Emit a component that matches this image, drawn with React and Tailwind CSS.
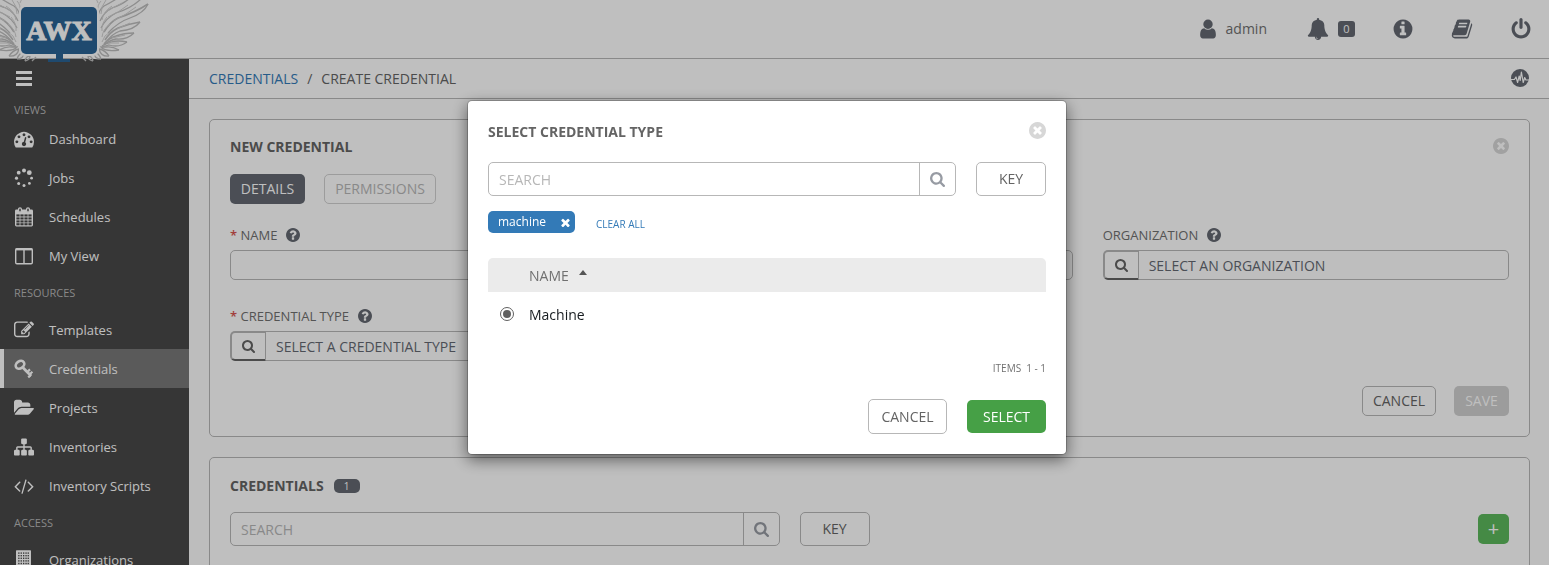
import React from "react";

const FA = {
  search: { box: "64 128 1664 1664", d: "M1216 832q0-185-131.5-316.5t-316.5-131.5-316.5 131.5-131.5 316.5 131.5 316.5 316.5 131.5 316.5-131.5 131.5-316.5zm512 832q0 52-38 90t-90 38q-54 0-90-38l-343-342q-179 124-399 124-143 0-273.5-55.5t-225-150-150-225-55.5-273.5 55.5-273.5 150-225 225-150 273.5-55.5 273.5 55.5 225 150 150 225 55.5 273.5q0 220-124 399l343 343q37 37 37 90z" },
  user: { box: "0 0 1792 1792", d: "M1536 1399q0 109-62.5 187t-150.5 78h-854q-88 0-150.5-78t-62.5-187q0-85 8.5-160.5t31.5-152 58.5-131 94-89 134.5-34.5q131 128 313 128t313-128q76 0 134.5 34.5t94 89 58.5 131 31.5 152 8.5 160.5zm-256-887q0 159-112.5 271.5t-271.5 112.5-271.5-112.5-112.5-271.5 112.5-271.5 271.5-112.5 271.5 112.5 112.5 271.5z" },
  timesCircle: { box: "128 128 1536 1536", d: "M1277 1122q0-26-19-45l-181-181 181-181q19-19 19-45 0-27-19-46l-90-90q-19-19-46-19-26 0-45 19l-181 181-181-181q-19-19-45-19-27 0-46 19l-90 90q-19 19-19 46 0 26 19 45l181 181-181 181q-19 19-19 45 0 27 19 46l90 90q19 19 46 19 26 0 45-19l181-181 181 181q19 19 45 19 27 0 46-19l90-90q19-19 19-46zm387-226q0 209-103 385.5t-279.5 279.5-385.5 103-385.5-103-279.5-279.5-103-385.5 103-385.5 279.5-279.5 385.5-103 385.5 103 279.5 279.5 103 385.5z" },
  question: { box: "128 128 1536 1536", d: "M1024 1376v-192q0-14-9-23t-23-9h-192q-14 0-23 9t-9 23v192q0 14 9 23t23 9h192q14 0 23-9t9-23zm256-672q0-88-55.5-163t-138.5-116-170-41q-243 0-371 213-15 24 8 42l132 100q7 6 19 6 16 0 25-12 53-68 86-92 34-24 86-24 48 0 85.5 26t37.5 59q0 38-20 61t-68 45q-63 28-115.5 86.5t-52.5 125.5v36q0 14 9 23t23 9h192q14 0 23-9t9-23q0-19 21.5-49.5t54.5-49.5q32-18 49-28.5t46-35 44.5-48 28-60.5 12.5-81zm384 192q0 209-103 385.5t-279.5 279.5-385.5 103-385.5-103-279.5-279.5-103-385.5 103-385.5 279.5-279.5 385.5-103 385.5 103 279.5 279.5 103 385.5z" },
  info: { box: "0 0 1792 1792", d: "M1152 1376v-160q0-14-9-23t-23-9h-96v-512q0-14-9-23t-23-9h-320q-14 0-23 9t-9 23v160q0 14 9 23t23 9h96v320h-96q-14 0-23 9t-9 23v160q0 14 9 23t23 9h448q14 0 23-9t9-23zm-128-896v-160q0-14-9-23t-23-9h-192q-14 0-23 9t-9 23v160q0 14 9 23t23 9h192q14 0 23-9t9-23zm640 416q0 209-103 385.5t-279.5 279.5-385.5 103-385.5-103-279.5-279.5-103-385.5 103-385.5 279.5-279.5 385.5-103 385.5 103 279.5 279.5 103 385.5z" },
  power: { box: "0 0 1792 1792", d: "M1664 896q0 156-61 298t-164 245-245 164-298 61-298-61-245-164-164-245-61-298q0-182 80.5-343t226.5-270q43-32 95.5-25t83.5 50q32 42 24.5 94.5t-49.5 84.5q-98 74-151.5 181t-53.5 228q0 104 40.5 198.5t109.5 163.5 163.5 109.5 198.5 40.5 198.5-40.5 163.5-109.5 109.5-163.5 40.5-198.5q0-121-53.5-228t-151.5-181q-42-32-49.5-84.5t24.5-94.5q31-43 84-50t95 25q146 109 226.5 270t80.5 343zm-640-768v640q0 52-38 90t-90 38-90-38-38-90v-640q0-52 38-90t90-38 90 38 38 90z" },
  bell: { box: "0 0 1792 1792", d: "M912 1696q0-16-16-16-59 0-101.5-42.5t-42.5-101.5q0-16-16-16t-16 16q0 73 51.5 124.5t124.5 51.5q16 0 16-16zm816-288q0 52-38 90t-90 38h-448q0 106-75 181t-181 75-181-75-75-181h-448q-52 0-90-38t-38-90q50-42 91-88t85-119.5 74.5-158.5 50-206 19.5-260q0-152 117-282.5t307-158.5q-8-19-8-39 0-40 28-68t68-28 68 28 28 68q0 20-8 39 190 28 307 158.5t117 282.5q0 139 19.5 260t50 206 74.5 158.5 85 119.5 91 88z" },
  book: { box: "0 0 1792 1792", d: "M1703 478q40 57 18 129l-275 906q-19 64-76.5 107.5t-122.5 43.5h-923q-77 0-148.5-53.5t-99.5-131.5q-24-67-2-127 0-4 3-27t4-37q1-8-3-21.5t-3-19.5q2-11 8-21t16.5-23.5 16.5-23.5q23-38 45-91.5t30-91.5q3-10 .5-30t-.5-28q3-11 17-28t17-23q21-36 42-92t25-90q1-9-2.500-32t.5-28q4-13 22-30.500t22-22.500q19-26 42.500-84.500t27.500-96.500q1-8-3-25.500t-2-26.500q2-8 9-18t18-23 17-21q8-12 16.500-30.500t15-35 16-36 19.500-32 26.500-23.500 36-11.500 47.500 5.500l-1 3q38-9 51-9h761q74 0 114 56t18 130l-274 906q-36 119-71.500 153.500t-128.500 34.500h-869q-27 0-38 15-11 16-1 43 24 70 144 70h923q29 0 56-15.500t35-41.500l300-987q7-22 5-57 38 15 59 43zm-1064 2q-4 13 2 22.500t20 9.500h608q13 0 25.500-9.500t16.500-22.500l21-64q4-13-2-22.500t-20-9.500h-608q-13 0-25.500 9.500t-16.500 22.500zm-83 256q-4 13 2 22.500t20 9.500h608q13 0 25.500-9.500t16.500-22.500l21-64q4-13-2-22.500t-20-9.500h-608q-13 0-25.500 9.500t-16.500 22.500z" },
  times: { box: "256 256 1280 1280", d: "M1490 1322q0 40-28 68l-136 136q-28 28-68 28t-68-28l-294-294-294 294q-28 28-68 28t-68-28l-136-136q-28-28-28-68t28-68l294-294-294-294q-28-28-28-68t28-68l136-136q28-28 68-28t68 28l294 294 294-294q28-28 68-28t68 28l136 136q28 28 28 68t-28 68l-294 294 294 294q28 28 28 68z" },
  dashboard: { box: "0 0 1792 1792", d: "M384 1152q0-53-37.5-90.5t-90.5-37.5-90.5 37.5-37.5 90.5 37.5 90.5 90.5 37.5 90.5-37.5 37.5-90.5zm192-448q0-53-37.5-90.5t-90.5-37.5-90.5 37.5-37.5 90.5 37.5 90.5 90.5 37.5 90.5-37.5 37.5-90.5zm428 481l101-382q6-26-7.5-48.5t-38.5-29.5-48 6.5-30 39.5l-101 382q-60 5-107 43.5t-63 98.5q-20 77 20 146t117 89 146-20 89-117q16-60-6-117t-72-91zm660-33q0-53-37.5-90.5t-90.5-37.5-90.5 37.5-37.5 90.5 37.5 90.5 90.5 37.5 90.5-37.5 37.5-90.5zm-640-640q0-53-37.5-90.5t-90.5-37.5-90.5 37.5-37.5 90.5 37.5 90.5 90.5 37.5 90.5-37.5 37.5-90.5zm448 192q0-53-37.5-90.5t-90.5-37.5-90.5 37.5-37.5 90.5 37.5 90.5 90.5 37.5 90.5-37.5 37.5-90.5zm320 448q0 261-141 483-19 29-54 29h-1402q-35 0-54-29-141-221-141-483 0-182 71-348t191-286 286-191 348-71 348 71 286 191 191 286 71 348z" },
  edit: { box: "0 0 1792 1792", d: "M888 1184l116-116-152-152-116 116v56h96v96h56zm440-720q-16-16-33 1l-350 350q-17 17-1 33t33-1l350-350q17-17 1-33zm80 594v190q0 119-84.5 203.5t-203.5 84.5h-832q-119 0-203.5-84.5t-84.5-203.5v-832q0-119 84.5-203.5t203.5-84.5h832q63 0 117 25 15 7 18 23 3 17-9 29l-49 49q-14 14-32 8-23-6-45-6h-832q-66 0-113 47t-47 113v832q0 66 47 113t113 47h832q66 0 113-47t47-113v-126q0-13 9-22l64-64q15-15 35-7t20 29zm-96-738l288 288-672 672h-288v-288zm444 132l-92 92-288-288 92-92q28-28 68-28t68 28l152 152q28 28 28 68t-28 68z" },
  folder: { box: "0 -44 1880 1880", d: "M1879 952q0 31-31 66l-336 396q-43 51-120.5 86.5t-143.5 35.5h-1088q-34 0-60.5-13t-26.5-43q0-31 31-66l336-396q43-51 120.5-86.5t143.5-35.5h1088q34 0 60.5 13t26.5 43zm-343-344v160h-832q-94 0-197 47.5t-164 119.5l-337 396-5 6q0-4-.5-12.5t-.5-12.5v-960q0-92 66-158t158-66h320q92 0 158 66t66 158v32h544q92 0 158 66t66 158z" },
  sitemap: { box: "0 0 1792 1792", d: "M1792 1248v320q0 40-28 68t-68 28h-320q-40 0-68-28t-28-68v-320q0-40 28-68t68-28h96v-192h-512v192h96q40 0 68 28t28 68v320q0 40-28 68t-68 28h-320q-40 0-68-28t-28-68v-320q0-40 28-68t68-28h96v-192h-512v192h96q40 0 68 28t28 68v320q0 40-28 68t-68 28h-320q-40 0-68-28t-28-68v-320q0-40 28-68t68-28h96v-192q0-52 38-90t90-38h512v-192h-96q-40 0-68-28t-28-68v-320q0-40 28-68t68-28h320q40 0 68 28t28 68v320q0 40-28 68t-68 28h-96v192h512q52 0 90 38t38 90v192h96q40 0 68 28t28 68z" },
  code: { box: "-64 0 1920 1792", d: "M553 1399l-50 50q-10 10-23 10t-23-10l-466-466q-10-10-10-23t10-23l466-466q10-10 23-10t23 10l50 50q10 10 10 23t-10 23l-393 393 393 393q10 10 10 23t-10 23zm591-1067l-373 1291q-4 13-15.5 19.5t-23.5 2.5l-62-17q-13-4-19.5-15.5t-2.5-24.5l373-1291q4-13 15.5-19.5t23.5-2.5l62 17q13 4 19.5 15.5t2.5 24.5zm657 651l-466 466q-10 10-23 10t-23-10l-50-50q-10-10-10-23t10-23l393-393-393-393q-10-10-10-23t10-23l50-50q10-10 23-10t23 10l466 466q10 10 10 23t-10 23z" },
};

function Icon({ name, className }) {
  return (
    <svg viewBox={FA[name].box} className={`shrink-0 ${className}`} fill="currentColor" aria-hidden="true">
      <path d={FA[name].d} />
    </svg>
  );
}

function JobsIcon() {
  return (
    <svg viewBox="0 0 20 20" className="size-5 shrink-0" fill="currentColor" aria-hidden="true">
      <circle cx="10" cy="2.4" r="2" />
      <circle cx="15.3" cy="4.7" r="2.4" />
      <circle cx="17.6" cy="10.2" r="1.4" />
      <circle cx="15.4" cy="15.4" r="1.4" />
      <circle cx="10" cy="17.6" r="1.5" />
      <circle cx="4.7" cy="15.4" r="1.5" />
      <circle cx="2.5" cy="10.2" r="1.6" />
      <circle cx="4.7" cy="4.7" r="1.9" />
    </svg>
  );
}

function CalendarIcon() {
  return (
    <svg viewBox="0 0 20 20" className="size-5 shrink-0" aria-hidden="true">
      <rect x="1" y="2.5" width="18" height="17" rx="1.4" fill="currentColor" />
      <g fill="#484848">
        {[7.4, 10.4, 13.4, 16.2].map((y) =>
          [2.4, 6.4, 10.4, 14.4].map((x) => <rect key={`${x}-${y}`} x={x} y={y} width="3.2" height="2.1" />)
        )}
      </g>
      <g fill="#484848" stroke="currentColor" strokeWidth="1.3">
        <rect x="4.6" y="0.8" width="2.8" height="4.4" rx="1.4" />
        <rect x="12.6" y="0.8" width="2.8" height="4.4" rx="1.4" />
      </g>
    </svg>
  );
}

function ColumnsIcon() {
  return (
    <svg viewBox="0 0 20 20" className="size-5 shrink-0" fill="none" stroke="currentColor" aria-hidden="true">
      <rect x="1.7" y="2.7" width="16.6" height="15" rx="1.2" strokeWidth="1.4" />
      <path d="M1.7 3.4h16.6" strokeWidth="2" />
      <path d="M10 3v14.5" strokeWidth="1.4" />
    </svg>
  );
}

function KeyIcon() {
  return (
    <svg viewBox="0 0 20 20" className="size-5 shrink-0" fill="none" stroke="currentColor" aria-hidden="true">
      <ellipse cx="6" cy="5.8" rx="4.600" ry="3.500" transform="rotate(-35 6 5.8)" strokeWidth="2.6" />
      <path d="M8.800 8.600l8.400 8.400" strokeWidth="2.8" />
      <path d="M16.200 16.600l-2 1.800M13.600 12.800l2.400-2.400M16 15l2.400-2.200" strokeWidth="2.2" />
    </svg>
  );
}

function BuildingIcon() {
  return (
    <svg viewBox="0 0 20 20" className="size-5 shrink-0" aria-hidden="true">
      <rect x="2" y="0.3" width="15" height="19.7" rx="0.6" fill="currentColor" />
      <g fill="#484848">
        {[2.4, 5, 7.6, 10.2, 12.8].map((y) =>
          [4.2, 6.6, 9, 11.4, 13.6].map((x) => <rect key={`${x}-${y}`} x={x} y={y} width="1.3" height="1.4" />)
        )}
        <rect x="7.6" y="16" width="3.8" height="4" />
      </g>
    </svg>
  );
}

function PulseIcon() {
  return (
    <svg viewBox="0 0 18 18" className="size-[18px]" aria-hidden="true">
      <circle cx="9" cy="9" r="9" fill="#646972" />
      <path d="M0 10.500h3.400l1.600-2.500 1.600 5.500L8.200 7l1 4.500L10.400 3l1.800 10.500 1.500-5 1.200 2.500H18" fill="none" stroke="#fff" strokeWidth="1.200" strokeLinejoin="round" />
    </svg>
  );
}

function Wing() {
  return (
    <g>
      <path
        d="M96 2Q102-4 104-8H146Q151 2 145 9Q138 15 130 17Q137 21 140 22Q136 28 122 31Q130 32 134 34Q127 39 118 39Q125 41 127 43Q119 48 111 46Q117 49 119 51Q111 54 104 51Q108 54 109 56Q102 58 97 55L100 59Q92 60 90 56L92 59Q85 59 83 56L97 50Z"
        fill="#fdfdfd"
      />
      <g fill="none" stroke="#bdbdbd" strokeWidth="1.300">
        <path d="M148 4Q136 12 118 18Q110 22 104 32" strokeWidth="1.6" />
        <path d="M148 4Q144 13 130 18Q118 22 108 33" />
        <path d="M142-2Q132 8 116 13Q106 18 101 28" />
        <path d="M130-2Q122 5 112 8Q104 12 100 21" />
        <path d="M118-2Q110 3 104 6Q99 10 98 16" />
        <path d="M140 22Q128 24 118 28Q110 32 105 40" strokeWidth="1.6" />
        <path d="M140 22Q134 30 120 31Q112 34 107 41" />
        <path d="M134 33Q124 33 116 36Q109 38 104 44" strokeWidth="1.6" />
        <path d="M134 33Q127 40 116 39Q110 40 104 45" />
        <path d="M127 42Q118 40 111 42Q106 43 102 46" />
        <path d="M127 42Q119 48 109 45L102 47" />
        <path d="M119 50Q112 46 106 47L101 47Q105 52 119 50" />
        <path d="M109 56Q105 50 99 49Q101 57 109 56" />
        <path d="M101 59Q99 53 94 52Q94 59 101 59M93 61Q92 56 88 56Q88 60 93 61M86 61L82 57" />
      </g>
      <g fill="none" stroke="#cfcfcf" strokeWidth="1">
        <path d="M98 3Q95-1 97-5M101 1Q97 5 98 12M106 0Q101 6 101 14M112 6Q103 12 102 20M107 17Q101 24 102 31M110 24Q103 29 102 37M110 32Q104 35 102 42" />
        <path d="M136 7Q126 15 113 21M128 5Q118 13 108 17M122 3Q112 8 106 12M130 23L117 29M125 35L112 38M119 43L108 43" />
      </g>
    </g>
  );
}

function Logo() {
  return (
    <svg viewBox="0 0 152 64" className="h-16 w-[152px]" role="img" aria-label="AWX">
      <Wing />
      <g transform="matrix(-1 0 0 1 118 0)">
        <Wing />
      </g>
      <rect x="19" y="5" width="80" height="51" rx="6" fill="#fff" />
      <rect x="21" y="7" width="76" height="47" rx="5" fill="#2a6395" />
      <path d="M56 53h7v6h7v3H48v-3h8z" fill="#2a6395" />
      <text
        x="59"
        y="40"
        textAnchor="middle"
        fill="#fff"
        stroke="#fff"
        strokeWidth="1"
        fontSize="28"
        fontWeight="700"
        fontFamily="'Liberation Serif',serif"
      >
        AWX
      </text>
    </svg>
  );
}

function NavHeading({ first, children }) {
  return (
    <h2 className={`flex items-center pl-[14px] text-[11px] leading-4 text-[#b7b7b7] ${first ? "h-[18px]" : "h-[35px]"}`}>
      {children}
    </h2>
  );
}

function NavItem({ icon, label, active }) {
  return (
    <a
      href="#"
      aria-current={active ? "page" : undefined}
      className={`flex h-[39px] items-center gap-[15px] border-l-4 pl-[10px] text-[13px] leading-5 text-white ${
        active ? "border-white bg-[#787878]" : "border-transparent"
      }`}
    >
      {icon}
      <span>{label}</span>
    </a>
  );
}

function Sidebar() {
  const big = "size-5";
  return (
    <nav className="w-[189px] shrink-0 bg-[#484848]">
      <button type="button" aria-label="Toggle menu" className="flex h-[42px] w-full flex-col justify-center gap-[3px] pb-1 pl-4">
        <span className="h-[3px] w-4 bg-white" />
        <span className="h-[3px] w-4 bg-white" />
        <span className="h-[3px] w-4 bg-white" />
      </button>
      <NavHeading first>VIEWS</NavHeading>
      <NavItem icon={<Icon name="dashboard" className={big} />} label="Dashboard" />
      <NavItem icon={<JobsIcon />} label="Jobs" />
      <NavItem icon={<CalendarIcon />} label="Schedules" />
      <NavItem icon={<ColumnsIcon />} label="My View" />
      <NavHeading>RESOURCES</NavHeading>
      <NavItem icon={<Icon name="edit" className={big} />} label="Templates" />
      <NavItem icon={<KeyIcon />} label="Credentials" active />
      <NavItem icon={<Icon name="folder" className={big} />} label="Projects" />
      <NavItem icon={<Icon name="sitemap" className={big} />} label="Inventories" />
      <NavItem icon={<Icon name="code" className={big} />} label="Inventory Scripts" />
      <NavHeading>ACCESS</NavHeading>
      <NavItem icon={<BuildingIcon />} label="Organizations" />
    </nav>
  );
}

function TopBar() {
  return (
    <header className="relative z-10 flex h-[59px] shrink-0 items-center justify-end border-b border-[#b7b7b7] bg-white pr-[17px] text-[#646972]">
      <a href="#" className="absolute top-0 left-0">
        <Logo />
      </a>
      <div className="flex items-center gap-[37px]">
        <div className="flex items-center gap-10">
          <a href="#" className="flex items-center gap-[7px] text-sm text-[#707070]">
            <Icon name="user" className="size-[22px] text-[#646972]" />
            admin
          </a>
          <button type="button" aria-label="Notifications" className="flex items-center gap-[9px]">
            <Icon name="bell" className="size-[22px]" />
            <span className="flex h-4 w-[17px] items-center justify-center rounded-[3px] bg-[#646972] text-[11px] leading-4 text-white">0</span>
          </button>
        </div>
        <button type="button" aria-label="About">
          <Icon name="info" className="size-[22px]" />
        </button>
        <a href="#" aria-label="Documentation">
          <Icon name="book" className="size-[22px]" />
        </a>
        <button type="button" aria-label="Log out">
          <Icon name="power" className="size-[22px]" />
        </button>
      </div>
    </header>
  );
}

function FieldLabel({ htmlFor, required, children }) {
  return (
    <div className="flex h-5 items-center gap-[9px] text-[13px] leading-5 text-[#707070]">
      <label htmlFor={htmlFor}>
        {required && <span className="font-semibold text-[#d9534f]">* </span>}
        {children}
      </label>
      <button type="button" aria-label="Help" className="pb-px">
        <Icon name="question" className="size-[14px] text-[#646972]" />
      </button>
    </div>
  );
}

function TextField({ id, label, required }) {
  return (
    <div className="flex flex-col gap-[5px]">
      <FieldLabel htmlFor={id} required={required}>{label}</FieldLabel>
      <input id={id} className="h-[30px] w-full rounded-[5px] border border-[#b7b7b7] bg-[#fefefe] px-[9px] text-sm" />
    </div>
  );
}

function LookupField({ id, label, required, placeholder }) {
  return (
    <div className="flex flex-col gap-[5px]">
      <FieldLabel htmlFor={id} required={required}>{label}</FieldLabel>
      <div className="flex h-[30px]">
        <button
          type="button"
          aria-label={`Look up ${label}`}
          className="flex w-[36px] items-center justify-center rounded-l-[5px] border-2 border-r border-t-[#b7b7b7] border-r-[#b7b7b7] border-b-[#646464] border-l-[#b7b7b7] pt-px text-[#646464]"
        >
          <Icon name="search" className="size-[13px]" />
        </button>
        <input
          id={id}
          placeholder={placeholder}
          className="min-w-0 flex-1 rounded-r-[5px] border border-l-0 border-[#b7b7b7] bg-[#fefefe] px-[10px] pt-[2px] text-sm placeholder:text-[#646972]"
        />
      </div>
    </div>
  );
}

function SearchRow({ id, className }) {
  return (
    <div className={`flex gap-5 ${className}`}>
      <div className="flex h-[34px] min-w-0 flex-1 rounded-[5px] border border-[#b7b7b7]">
        <input
          id={id}
          aria-label="Search"
          placeholder="SEARCH"
          className="min-w-0 flex-1 bg-transparent px-[10px] pt-[2px] text-sm placeholder:text-[#b7b7b7]"
        />
        <button type="button" aria-label="Run search" className="flex w-9 items-center justify-center border-l border-[#b7b7b7] text-[#979ba3]">
          <Icon name="search" className="size-[15px]" />
        </button>
      </div>
      <button type="button" className="h-[34px] w-[70px] rounded-[5px] border border-[#b7b7b7] bg-white text-sm text-[#646464]">
        KEY
      </button>
    </div>
  );
}

function NewCredential() {
  return (
    <section className="rounded-[5px] border border-[#b7b7b7] bg-white px-5 pt-[17px] pb-5">
      <div className="flex h-5 items-center justify-between">
        <h1 className="text-sm font-bold text-[#646464]">NEW CREDENTIAL</h1>
        <button type="button" aria-label="Close" className="pb-[2px]">
          <Icon name="timesCircle" className="size-4 text-[#d7d7d7]" />
        </button>
      </div>
      <div className="mt-[17px] flex gap-[19px]">
        <button type="button" className="h-[30px] w-[75px] rounded-[5px] bg-[#646972] text-sm text-white">
          DETAILS
        </button>
        <button type="button" className="h-[30px] w-[112px] rounded-[5px] border border-[#d0d0d0] text-sm text-[#b7b7b7]">
          PERMISSIONS
        </button>
      </div>
      <form className="mt-[21px] grid grid-cols-3 gap-x-[30px] gap-y-[26px]">
        <TextField id="name" label="NAME" required />
        <TextField id="description" label="DESCRIPTION" />
        <LookupField id="organization" label="ORGANIZATION" placeholder="SELECT AN ORGANIZATION" />
        <LookupField id="credential-type" label="CREDENTIAL TYPE" required placeholder="SELECT A CREDENTIAL TYPE" />
      </form>
      <div className="mt-[25px] flex justify-end gap-[18px] text-sm">
        <button type="button" className="h-[30px] w-[74px] rounded-[5px] border border-[#b7b7b7] text-[#646464]">
          CANCEL
        </button>
        <button type="button" disabled className="h-[30px] w-[55px] rounded-[5px] bg-[#d0d0d0] text-white">
          SAVE
        </button>
      </div>
    </section>
  );
}

function CredentialList() {
  return (
    <section className="rounded-[5px] border border-[#b7b7b7] bg-white px-5 pt-[18px] pb-5">
      <div className="flex h-5 items-center gap-[10px]">
        <h2 className="text-sm font-bold text-[#646464]">CREDENTIALS</h2>
        <span className="flex h-[14px] w-[26px] items-center justify-center rounded-[5px] bg-[#646972] text-[10px] leading-none text-white">1</span>
      </div>
      <div className="mt-4 flex items-center justify-between">
        <SearchRow id="credential-search" className="w-1/2" />
        <button
          type="button"
          aria-label="Add credential"
          className="flex h-[30px] w-[31px] items-center justify-center rounded-[5px] bg-[#5cb85c] text-xl leading-none text-white"
        >
          +
        </button>
      </div>
      <div className="h-24" />
    </section>
  );
}

function CredentialTypeDialog() {
  return (
    <div className="fixed inset-0 z-20 flex items-start justify-center bg-black/25 pt-[100px] pr-[15px]">
      <div
        role="dialog"
        aria-modal="true"
        aria-labelledby="dialog-title"
        className="w-[600px] rounded-[5px] border border-black/20 bg-white bg-clip-padding px-5 pt-[21px] pb-5 shadow-[0_5px_15px_rgba(0,0,0,0.5)]"
      >
        <div className="flex h-5 items-start justify-between">
          <h2 id="dialog-title" className="text-sm font-bold text-[#646464]">SELECT CREDENTIAL TYPE</h2>
          <button type="button" aria-label="Close dialog">
            <Icon name="timesCircle" className="size-[17px] text-[#d7d7d7]" />
          </button>
        </div>
        <SearchRow id="type-search" className="mt-5" />
        <div className="mt-[15px] flex h-[22px] items-center gap-[21px]">
          <span className="flex h-full w-[87px] items-center justify-between rounded-[5px] bg-[#337ab7] pr-[5px] pl-[10px] text-xs text-white">
            machine
            <button type="button" aria-label="Remove machine">
              <Icon name="times" className="size-[9px]" />
            </button>
          </span>
          <button type="button" className="pt-1 text-[10px] leading-4 text-[#337ab7]">
            CLEAR ALL
          </button>
        </div>
        <table className="mt-[25px] w-full text-left text-sm">
          <thead>
            <tr className="h-[34px] text-[#707070]">
              <th className="w-[41px] rounded-tl-[5px] bg-[#ebebeb]" aria-label="Selected" />
              <th className="rounded-tr-[5px] bg-[#ebebeb] pt-[2px] font-normal">
                <button type="button" className="flex items-center gap-[10px]">
                  NAME
                  <svg viewBox="0 0 8 5" className="mb-2 h-[5px] w-2" fill="#555" aria-hidden="true">
                    <path d="M0 5 4 0l4 5z" />
                  </svg>
                </button>
              </th>
            </tr>
          </thead>
          <tbody>
            <tr className="h-[45px] text-[#161b1f]">
              <td className="pb-[2px] pl-3">
                <input
                  id="machine-type"
                  type="radio"
                  name="credential-type-choice"
                  defaultChecked
                  className="block size-[14px] appearance-none rounded-full border border-[#606060] bg-[#606060] bg-clip-content p-[2px]"
                />
              </td>
              <td>
                <label htmlFor="machine-type">Machine</label>
              </td>
            </tr>
          </tbody>
        </table>
        <p className="mt-[23px] flex justify-end gap-[5px] text-[10px] leading-4 text-[#707070]">
          <span>ITEMS</span>
          <span>1 - 1</span>
        </p>
        <div className="mt-[23px] flex items-center justify-end gap-5 text-sm">
          <button type="button" className="h-[35px] w-[79px] rounded-[5px] border border-[#b7b7b7] text-[#646464]">
            CANCEL
          </button>
          <button type="button" className="h-[33px] w-[79px] rounded-[5px] bg-[#46a046] text-white">
            SELECT
          </button>
        </div>
      </div>
    </div>
  );
}

export default function App() {
  return (
    <div className="flex h-screen flex-col overflow-hidden bg-[#fdfdfd] font-['Open_Sans','Noto_Sans',sans-serif]">
      <TopBar />
      <div className="flex min-h-0 flex-1 items-stretch">
        <Sidebar />
        <main className="min-w-0 flex-1">
          <div className="flex h-10 items-center justify-between border-b border-[#b7b7b7] bg-white pr-5 pl-5 text-sm">
            <nav className="flex gap-[9px] text-[#646464]" aria-label="Breadcrumb">
              <a href="#" className="text-[#337ab7]">CREDENTIALS</a>
              <span>/</span>
              <span>CREATE CREDENTIAL</span>
            </nav>
            <button type="button" aria-label="Activity stream" className="pb-[2px]">
              <PulseIcon />
            </button>
          </div>
          <div className="flex flex-col gap-5 pt-5 pr-[19px] pl-5">
            <NewCredential />
            <CredentialList />
          </div>
        </main>
      </div>
      <CredentialTypeDialog />
    </div>
  );
}
